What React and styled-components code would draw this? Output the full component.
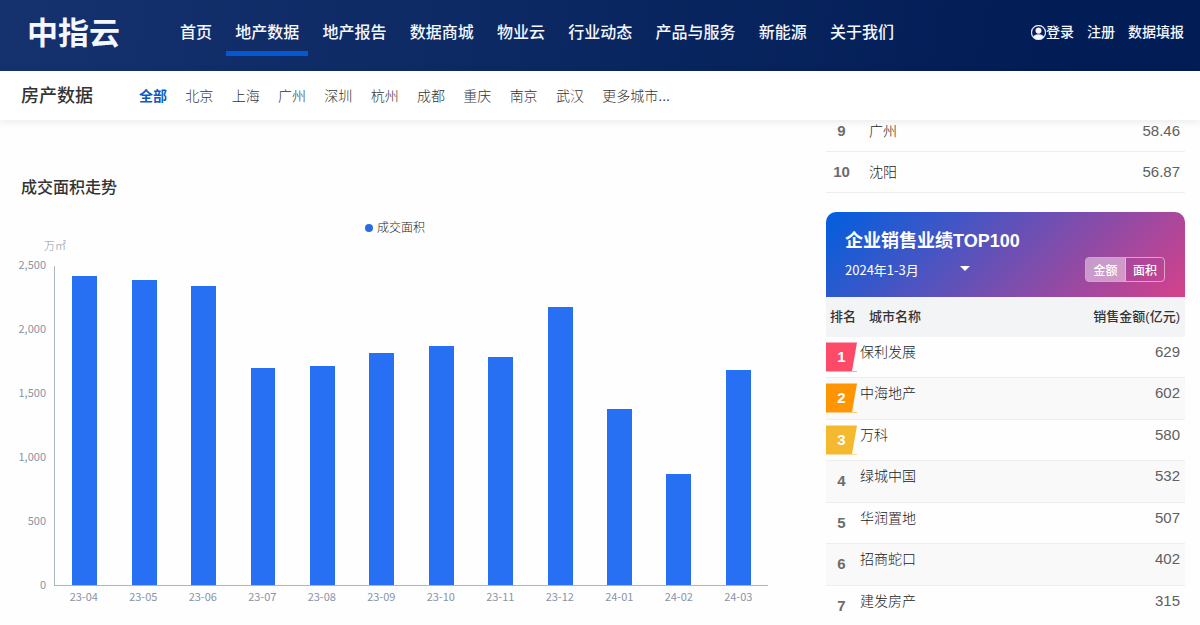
import { useState } from "react";
import styled, { createGlobalStyle, css } from "styled-components";
import { BsPersonCircle } from "react-icons/bs";

const GlobalStyle = createGlobalStyle`
* {
box-sizing: border-box;
}
body {
margin: 0;
background: #fefefe;
color: #333;
font-family: "Liberation Sans", "Noto Sans CJK SC", sans-serif;
}
button, select {
font-family: inherit;
}
`

const Page = styled.div`
display: flex;
flex-direction: column;
height: 100vh;
overflow: hidden;
`
const Header = styled.header`
display: flex;
align-items: center;
flex-shrink: 0;
height: 71px;
padding: 0 16px 0 27px;
background: linear-gradient(100deg, #15326f 0%, #0b2862 45%, #021c55 90%);
`
const Logo = styled.a`
width: 144px;
flex-shrink: 0;
padding-bottom: 4px;
color: #f4f7ff;
font-size: 31px;
font-weight: bold;
line-height: 36px;
text-decoration: none;
`
const Nav = styled.nav`
display: flex;
justify-content: space-between;
flex: 0 1 732px;
height: 56px;
align-self: flex-start;
`
const NavLink = styled.a`
padding: 21px 9px 0;
border-bottom: 5px solid ${(props) => (props.$active ? "#0559d0" : "transparent")};
color: #f4f7ff;
font-size: 16px;
font-weight: 500;
line-height: 24px;
white-space: nowrap;
text-decoration: none;
`
const Account = styled.div`
display: flex;
gap: 13px;
margin-left: auto;
padding-bottom: 7px;
`
const AccountLink = styled.a`
display: flex;
align-items: center;
color: #f4f7ff;
font-size: 14px;
font-weight: 500;
line-height: 20px;
white-space: nowrap;
text-decoration: none;
svg {
stroke: currentColor;
stroke-width: 0.4px;
}
`
const SubBar = styled.div`
position: relative;
z-index: 1;
display: flex;
align-items: center;
flex-shrink: 0;
height: 49px;
padding: 0 21px;
background: white;
box-shadow: 0 2px 8px rgba(0, 0, 0, 0.08);
`
const PageTitle = styled.h1`
width: 118px;
flex-shrink: 0;
margin: 0;
font-size: 18px;
font-weight: 500;
line-height: 24px;
`
const Cities = styled.nav`
display: flex;
justify-content: space-between;
flex: 0 1 531px;
`
const City = styled.button`
padding: 0;
border: none;
background: none;
color: ${(props) => (props.$active ? "#0d5cc4" : "#333")};
font-size: 14px;
font-weight: ${(props) => (props.$active ? "bold" : "300")};
line-height: 20px;
white-space: nowrap;
cursor: pointer;
`
const Main = styled.main`
display: grid;
grid-template-columns: minmax(0, 1fr) 359px;
gap: 54px;
padding: 0 15px 0 21px;
`
const Trend = styled.section`
padding-top: 56px;
`
const SectionTitle = styled.h2`
margin: 0;
font-size: 16px;
font-weight: 500;
line-height: 24px;
`
const Legend = styled.div`
display: flex;
align-items: center;
justify-content: center;
gap: 4px;
margin-top: 20px;
padding-right: 3px;
color: #222;
font-size: 12px;
font-weight: 300;
line-height: 16px;
`
const Dot = styled.span`
width: 8px;
height: 8px;
border-radius: 50%;
background: #2a6ce0;
`
const Chart = styled.div`
display: grid;
grid-template-columns: 25px minmax(0, 1fr);
column-gap: 8px;
padding-right: 4px;
color: #8a93a5;
font-family: "Noto Sans CJK SC", sans-serif;
font-size: 11px;
line-height: 12px;
`
const Unit = styled.div`
grid-column: 1 / -1;
padding: 3px 0 15px 23px;
font-weight: 300;
`
const Ticks = styled.div`
display: flex;
flex-direction: column;
justify-content: space-between;
align-items: flex-end;
margin: -8px 0 -4px;
`
const Plot = styled.div`
display: flex;
height: 320px;
border: solid #a9b7bf;
border-width: 0 0 1px 1px;
`
const Slot = styled.div`
display: flex;
align-items: flex-end;
justify-content: center;
flex: 1;
`
const Bar = styled.div`
width: 42%;
background: #276ff3;
`
const Months = styled.div`
display: flex;
grid-column: 2;
padding-top: 4px;
`
const Month = styled.span`
flex: 1;
text-align: center;
`
const Side = styled.aside`
margin-top: -9px;
`
const Table = styled.table`
width: 100%;
border-collapse: separate;
border-spacing: 0;
table-layout: fixed;
`
const Row = styled.tr`
height: 41px;
&:nth-child(even) {
height: ${(props) => (props.$striped ? "42px" : "41px")};
background: ${(props) => (props.$striped ? "#f9f9fa" : "none")};
}
`
const Head = styled.th`
width: ${(props) => props.$width || "auto"};
height: 40px;
padding: 0 ${(props) => (props.$right ? "5px" : "0")} 4px ${(props) => props.$left || "0"};
background: #f3f4f6;
font-size: 13px;
font-weight: 500;
text-align: ${(props) => (props.$right ? "right" : "left")};
`
const cell = css`
padding: 0;
border-bottom: 1px solid #eee;
line-height: 30px;
vertical-align: ${(props) => (props.$top ? "top" : "middle")};
`
const Rank = styled.td`
${cell}
width: 31px;
padding-top: ${(props) => (props.$top ? "5px" : "0")};
color: #6c6c6c;
font-size: 15px;
font-weight: bold;
text-align: center;
`
const Name = styled.td`
${cell}
padding-left: ${(props) => (props.$top ? "3px" : "12px")};
color: #222;
font-size: 14px;
font-weight: 300;
`
const Value = styled.td`
${cell}
width: 110px;
padding-right: 5px;
color: #606060;
font-size: 15px;
text-align: right;
`
const Badge = styled.div`
position: relative;
height: 30px;
color: white;
svg {
position: absolute;
inset: 0;
}
span {
position: relative;
}
`
const Banner = styled.div`
display: flex;
align-items: flex-end;
justify-content: space-between;
height: 85px;
margin-top: 19px;
padding: 0 20px 15px 19px;
border-radius: 10px 10px 0 0;
background: linear-gradient(135deg, #005fdf, #d5418a);
color: white;
`
const BannerTitle = styled.h2`
margin: 0 0 7px;
font-size: 18px;
font-weight: bold;
line-height: 24px;
`
const Period = styled.div`
position: relative;
width: 125px;
margin-bottom: 2px;
svg {
position: absolute;
top: 6px;
right: 0;
pointer-events: none;
}
`
const Select = styled.select`
display: block;
appearance: none;
width: 100%;
padding: 0;
border: none;
background: none;
color: white;
font-family: "Noto Sans CJK SC", sans-serif;
font-size: 13px;
line-height: 20px;
`
const Toggle = styled.div`
display: flex;
border: 1px solid rgba(255, 255, 255, 0.5);
border-radius: 4px;
overflow: hidden;
`
const ToggleButton = styled.button`
width: 39px;
height: 23px;
padding: 0;
border: none;
background: ${(props) => (props.$active ? "rgba(255, 255, 255, 0.45)" : "none")};
color: white;
font-size: 12px;
font-weight: 500;
cursor: pointer;
& + & {
border-left: 1px solid rgba(255, 255, 255, 0.6);
}
`

const links = ["首页", "地产数据", "地产报告", "数据商城", "物业云", "行业动态", "产品与服务", "新能源", "关于我们"];
const cities = ["全部", "北京", "上海", "广州", "深圳", "杭州", "成都", "重庆", "南京", "武汉", "更多城市..."];
const ticks = ["2,500", "2,000", "1,500", "1,000", "500", "0"];
const MAX = 2500;
const months = [
   { label: "23-04", value: 2423 },
   { label: "23-05", value: 2391 },
   { label: "23-06", value: 2340 },
   { label: "23-07", value: 1700 },
   { label: "23-08", value: 1717 },
   { label: "23-09", value: 1819 },
   { label: "23-10", value: 1871 },
   { label: "23-11", value: 1788 },
   { label: "23-12", value: 2182 },
   { label: "24-01", value: 1377 },
   { label: "24-02", value: 869 },
   { label: "24-03", value: 1684 },
];
const cityRanks = [
   { rank: 9, name: "广州", value: "58.46" },
   { rank: 10, name: "沈阳", value: "56.87" },
];
const companies = [
   { name: "保利发展", value: 629 },
   { name: "中海地产", value: 602 },
   { name: "万科", value: 580 },
   { name: "绿城中国", value: 532 },
   { name: "华润置地", value: 507 },
   { name: "招商蛇口", value: 402 },
   { name: "建发房产", value: 315 },
];
const badgeColors = ["#fd4a68", "#ff9502", "#f5b92f"];

function RankBadge({ rank }) {
   const color = badgeColors[rank - 1];
   return (
      <Badge>
         <svg width="31" height="30" viewBox="0 0 31 30">
            <path d="M0 0.5H31L26 29H31V29.6H0Z" fill={color} />
         </svg>
         <span>{rank}</span>
      </Badge>
   );
}

function TrendChart() {
   return (
      <Trend>
         <SectionTitle>成交面积走势</SectionTitle>
         <Legend><Dot />成交面积</Legend>
         <Chart>
            <Unit>万㎡</Unit>
            <Ticks>
               {ticks.map((tick) => <span key={tick}>{tick}</span>)}
            </Ticks>
            <Plot>
               {months.map((month) => (
                  <Slot key={month.label}>
                     <Bar style={{ height: `${(month.value / MAX) * 100}%` }} />
                  </Slot>
               ))}
            </Plot>
            <Months>
               {months.map((month) => <Month key={month.label}>{month.label}</Month>)}
            </Months>
         </Chart>
      </Trend>
   );
}

export default function App() {
   const [city, setCity] = useState("全部");
   const [unit, setUnit] = useState("金额");

   return (
      <Page>
         <GlobalStyle />
         <Header>
            <Logo href="#">中指云</Logo>
            <Nav>
               {links.map((link) => (
                  <NavLink key={link} href="#" $active={link === "地产数据"}>{link}</NavLink>
               ))}
            </Nav>
            <Account>
               <AccountLink href="#"><BsPersonCircle size={15} />登录</AccountLink>
               <AccountLink href="#">注册</AccountLink>
               <AccountLink href="#">数据填报</AccountLink>
            </Account>
         </Header>
         <SubBar>
            <PageTitle>房产数据</PageTitle>
            <Cities>
               {cities.map((name) => (
                  <City key={name} $active={name === city} onClick={() => setCity(name)}>{name}</City>
               ))}
            </Cities>
         </SubBar>
         <Main>
            <TrendChart />
            <Side>
               <Table>
                  <tbody>
                     {cityRanks.map((item) => (
                        <Row key={item.rank}>
                           <Rank>{item.rank}</Rank>
                           <Name>{item.name}</Name>
                           <Value>{item.value}</Value>
                        </Row>
                     ))}
                  </tbody>
               </Table>
               <Banner>
                  <div>
                     <BannerTitle>企业销售业绩TOP100</BannerTitle>
                     <Period>
                        <Select aria-label="时间">
                           <option>2024年1-3月</option>
                        </Select>
                        <svg width="10" height="5" viewBox="0 0 10 5">
                           <path d="M0 0H10L5 5Z" fill="white" />
                        </svg>
                     </Period>
                  </div>
                  <Toggle>
                     {["金额", "面积"].map((name) => (
                        <ToggleButton key={name} $active={name === unit} onClick={() => setUnit(name)}>{name}</ToggleButton>
                     ))}
                  </Toggle>
               </Banner>
               <Table>
                  <thead>
                     <tr>
                        <Head $width="31px" $left="4px">排名</Head>
                        <Head $left="12px">城市名称</Head>
                        <Head $width="110px" $right>销售金额(亿元)</Head>
                     </tr>
                  </thead>
                  <tbody>
                     {companies.map((item, i) => (
                        <Row key={item.name} $striped>
                           <Rank $top>{i < 3 ? <RankBadge rank={i + 1} /> : i + 1}</Rank>
                           <Name $top>{item.name}</Name>
                           <Value $top>{item.value}</Value>
                        </Row>
                     ))}
                  </tbody>
               </Table>
            </Side>
         </Main>
      </Page>
   );
}
